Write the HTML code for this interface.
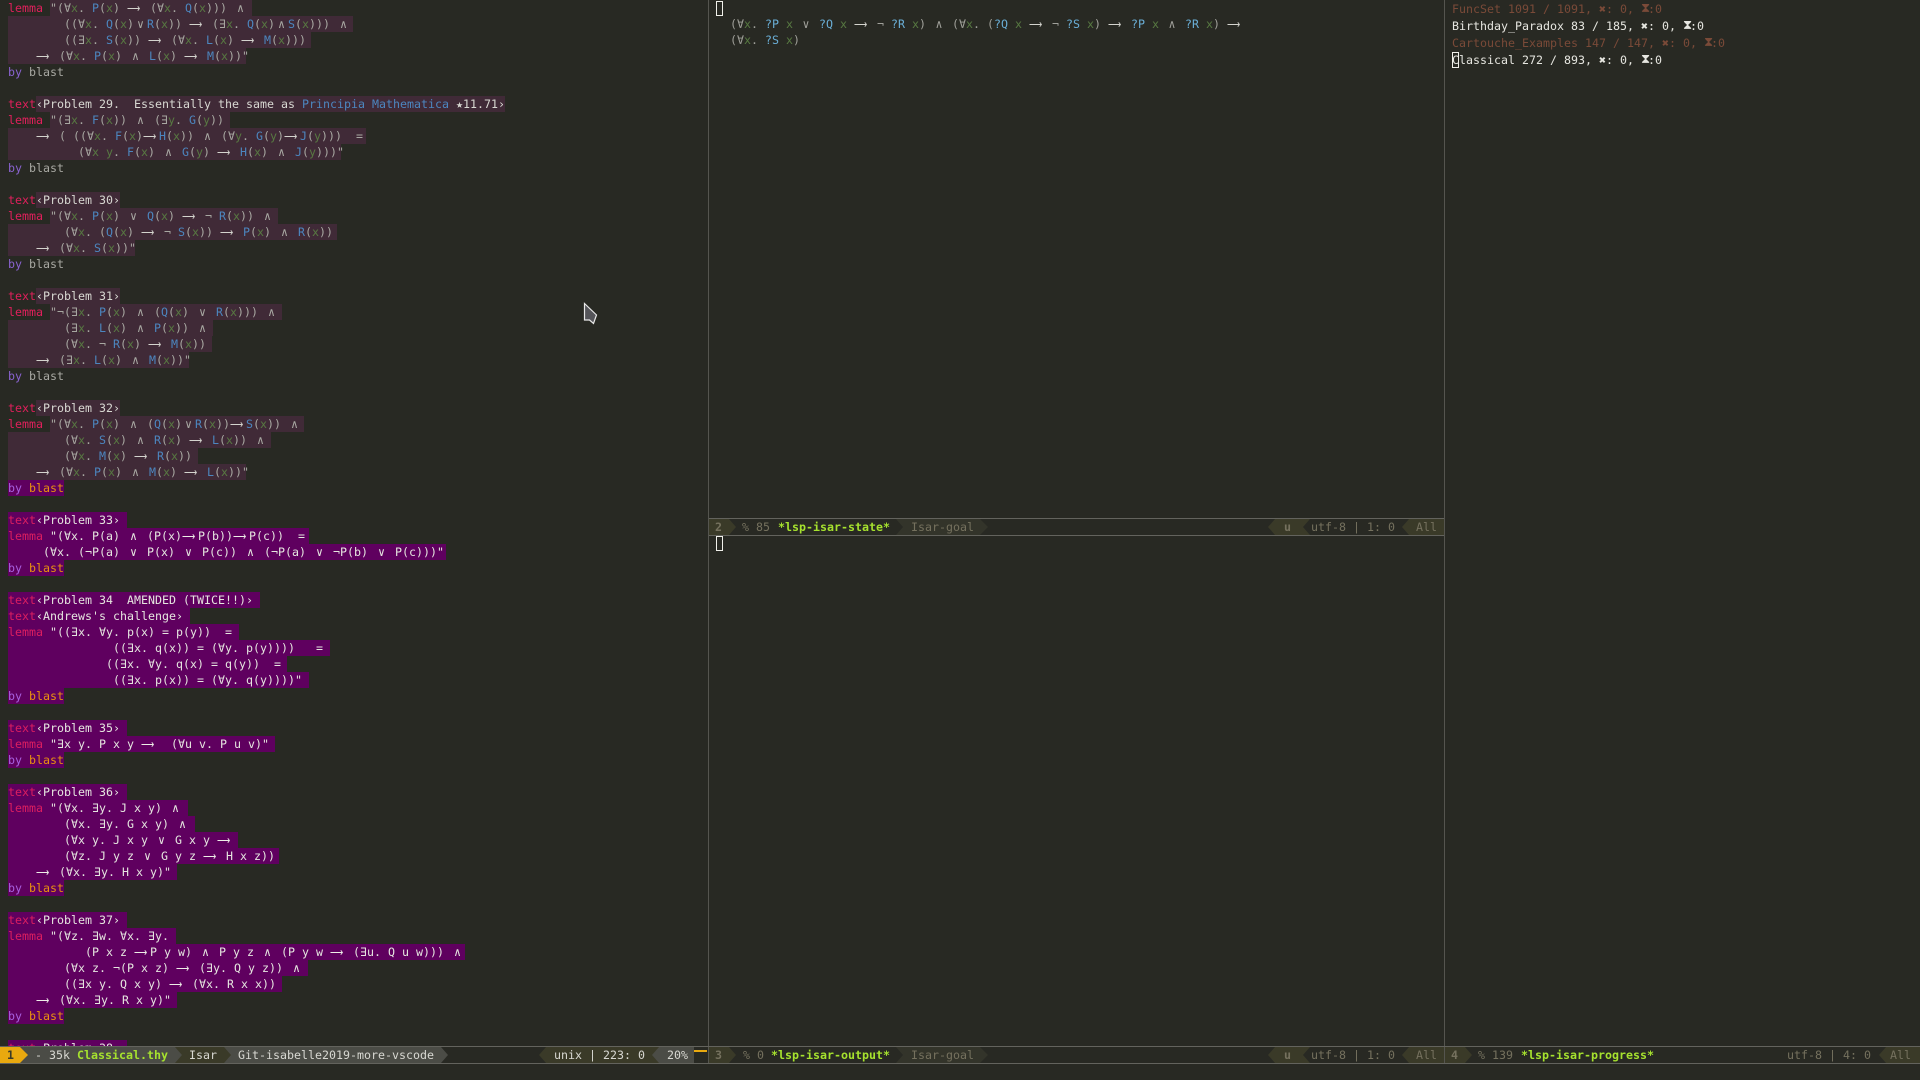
<!DOCTYPE html>
<html><head><meta charset="utf-8"><style>
html,body{margin:0;padding:0;width:1920px;height:1080px;overflow:hidden;background:#282923}
body{position:relative;font:11.63px/16px "DejaVu Sans Mono","Liberation Mono",monospace;color:#a8a8a2}
.r{position:absolute;left:8px;height:16px;white-space:pre;z-index:0}
.r em{position:absolute;top:0;left:0;height:16px;z-index:-1;display:block}
.d em{background:#402a37}
.c em{background:#5f005f}
.c{color:#e6e6e0}
.w{color:#d8d8d2}
a{color:#e0205c}
.c a{color:#dc1e60}
i{font-style:normal;color:#4c86bf}
b{font-weight:normal;color:#587a42}
s{text-decoration:none;display:inline-block;width:16px;height:16px;text-align:left;color:#d4d4ce;overflow:visible;white-space:nowrap;font-family:"DejaVu Sans",sans-serif;vertical-align:top;transform:scaleX(.8);transform-origin:0 50%}
u{text-decoration:none;display:inline-block;width:13px;height:16px;text-align:center;vertical-align:top}
.c s{color:#eeeee8}
tt{font:inherit;color:#8a63d0}
kbd{font:inherit;color:#a8a8a2}
.c tt{color:#a860e0}
.c kbd{color:#e8900f}
.cur{position:absolute;box-sizing:border-box;border:1px solid #f0f0ea;width:7px;height:15px;z-index:3}
.v{position:absolute;top:0;width:1px;height:1064px;background:#55554f;z-index:2}
.h{position:absolute;height:1px;background:#63635d;z-index:4}
.mb{position:absolute;left:0;top:1046px;width:1920px;height:34px;background:#282923;z-index:2}
.t{position:absolute;white-space:pre;height:16px;z-index:5;color:#d8d8d2}
.g{font-weight:bold;color:#a6e22e}
.n{color:#75715e}
.m{position:absolute;left:0;top:0;z-index:4}
.q{position:absolute;left:730px;height:16px;white-space:pre;z-index:1;color:#a0a09a}
.q i{color:#6aaed6}
.q u{width:12px}
.p{position:absolute;left:1452px;height:16px;white-space:pre;z-index:1;color:#e6e6e0}
.p var{font-style:normal;display:inline-block;width:7px;height:16px;overflow:visible;vertical-align:top;font-family:"DejaVu Sans",sans-serif;font-size:13px}
.o{color:#7a4a38}
</style></head><body>

<div class="r d" style="top:0"><em style="left:42px;width:202px"></em><a>lemma</a> "(∀<b>x</b>. <i>P</i>(<b>x</b>) <s>⟶</s> (∀<b>x</b>. <i>Q</i>(<b>x</b>))) <u>∧</u></div>
<div class="r d" style="top:16px"><em style="width:345px"></em>        ((∀<b>x</b>. <i>Q</i>(<b>x</b>)<u>∨</u><i>R</i>(<b>x</b>)) <s>⟶</s> (∃<b>x</b>. <i>Q</i>(<b>x</b>)<u>∧</u><i>S</i>(<b>x</b>))) <u>∧</u></div>
<div class="r d" style="top:32px"><em style="width:303px"></em>        ((∃<b>x</b>. <i>S</i>(<b>x</b>)) <s>⟶</s> (∀<b>x</b>. <i>L</i>(<b>x</b>) <s>⟶</s> <i>M</i>(<b>x</b>)))</div>
<div class="r d" style="top:48px"><em style="width:238px"></em>    <s>⟶</s> (∀<b>x</b>. <i>P</i>(<b>x</b>) <u>∧</u> <i>L</i>(<b>x</b>) <s>⟶</s> <i>M</i>(<b>x</b>))"</div>
<div class="r" style="top:64px"><tt>by</tt> <kbd>blast</kbd></div>

<div class="r d w" style="top:96px"><em style="left:28px;width:469px"></em><a>text</a>‹Problem 29.  Essentially the same as <i>Principia Mathematica</i> ★11.71›</div>
<div class="r d" style="top:112px"><em style="left:42px;width:180px"></em><a>lemma</a> "(∃<b>x</b>. <i>F</i>(<b>x</b>)) <u>∧</u> (∃<b>y</b>. <i>G</i>(<b>y</b>))</div>
<div class="r d" style="top:128px"><em style="width:358px"></em>    <s>⟶</s> ( ((∀<b>x</b>. <i>F</i>(<b>x</b>)<s>⟶</s><i>H</i>(<b>x</b>)) <u>∧</u> (∀<b>y</b>. <i>G</i>(<b>y</b>)<s>⟶</s><i>J</i>(<b>y</b>)))  =</div>
<div class="r d" style="top:144px"><em style="width:333px"></em>          (∀<b>x</b> <b>y</b>. <i>F</i>(<b>x</b>) <u>∧</u> <i>G</i>(<b>y</b>) <s>⟶</s> <i>H</i>(<b>x</b>) <u>∧</u> <i>J</i>(<b>y</b>)))"</div>
<div class="r" style="top:160px"><tt>by</tt> <kbd>blast</kbd></div>

<div class="r d w" style="top:192px"><em style="left:28px;width:84px"></em><a>text</a>‹Problem 30›</div>
<div class="r d" style="top:208px"><em style="left:42px;width:228px"></em><a>lemma</a> "(∀<b>x</b>. <i>P</i>(<b>x</b>) <u>∨</u> <i>Q</i>(<b>x</b>) <s>⟶</s> ¬ <i>R</i>(<b>x</b>)) <u>∧</u></div>
<div class="r d" style="top:224px"><em style="width:329px"></em>        (∀<b>x</b>. (<i>Q</i>(<b>x</b>) <s>⟶</s> ¬ <i>S</i>(<b>x</b>)) <s>⟶</s> <i>P</i>(<b>x</b>) <u>∧</u> <i>R</i>(<b>x</b>))</div>
<div class="r d" style="top:240px"><em style="width:127px"></em>    <s>⟶</s> (∀<b>x</b>. <i>S</i>(<b>x</b>))"</div>
<div class="r" style="top:256px"><tt>by</tt> <kbd>blast</kbd></div>

<div class="r d w" style="top:288px"><em style="left:28px;width:84px"></em><a>text</a>‹Problem 31›</div>
<div class="r d" style="top:304px"><em style="left:42px;width:232px"></em><a>lemma</a> "¬(∃<b>x</b>. <i>P</i>(<b>x</b>) <u>∧</u> (<i>Q</i>(<b>x</b>) <u>∨</u> <i>R</i>(<b>x</b>))) <u>∧</u></div>
<div class="r d" style="top:320px"><em style="width:205px"></em>        (∃<b>x</b>. <i>L</i>(<b>x</b>) <u>∧</u> <i>P</i>(<b>x</b>)) <u>∧</u></div>
<div class="r d" style="top:336px"><em style="width:204px"></em>        (∀<b>x</b>. ¬ <i>R</i>(<b>x</b>) <s>⟶</s> <i>M</i>(<b>x</b>))</div>
<div class="r d" style="top:352px"><em style="width:181px"></em>    <s>⟶</s> (∃<b>x</b>. <i>L</i>(<b>x</b>) <u>∧</u> <i>M</i>(<b>x</b>))"</div>
<div class="r" style="top:368px"><tt>by</tt> <kbd>blast</kbd></div>

<div class="r d w" style="top:400px"><em style="left:28px;width:84px"></em><a>text</a>‹Problem 32›</div>
<div class="r d" style="top:416px"><em style="left:42px;width:254px"></em><a>lemma</a> "(∀<b>x</b>. <i>P</i>(<b>x</b>) <u>∧</u> (<i>Q</i>(<b>x</b>)<u>∨</u><i>R</i>(<b>x</b>))<s>⟶</s><i>S</i>(<b>x</b>)) <u>∧</u></div>
<div class="r d" style="top:432px"><em style="width:263px"></em>        (∀<b>x</b>. <i>S</i>(<b>x</b>) <u>∧</u> <i>R</i>(<b>x</b>) <s>⟶</s> <i>L</i>(<b>x</b>)) <u>∧</u></div>
<div class="r d" style="top:448px"><em style="width:190px"></em>        (∀<b>x</b>. <i>M</i>(<b>x</b>) <s>⟶</s> <i>R</i>(<b>x</b>))</div>
<div class="r d" style="top:464px"><em style="width:238px"></em>    <s>⟶</s> (∀<b>x</b>. <i>P</i>(<b>x</b>) <u>∧</u> <i>M</i>(<b>x</b>) <s>⟶</s> <i>L</i>(<b>x</b>))"</div>
<div class="r c" style="top:480px"><em style="width:56px"></em><tt>by</tt> <kbd>blast</kbd></div>

<div class="r c" style="top:512px"><em style="width:119px"></em><a>text</a>‹Problem 33›</div>
<div class="r c" style="top:528px"><em style="width:301px"></em><a>lemma</a> "(∀x. P(a) <u>∧</u> (P(x)<s>⟶</s>P(b))<s>⟶</s>P(c))  =</div>
<div class="r c" style="top:544px"><em style="width:438px"></em>     (∀x. (¬P(a) <u>∨</u> P(x) <u>∨</u> P(c)) <u>∧</u> (¬P(a) <u>∨</u> ¬P(b) <u>∨</u> P(c)))"</div>
<div class="r c" style="top:560px"><em style="width:56px"></em><tt>by</tt> <kbd>blast</kbd></div>

<div class="r c" style="top:592px"><em style="width:252px"></em><a>text</a>‹Problem 34  AMENDED (TWICE!!)›</div>
<div class="r c" style="top:608px"><em style="width:182px"></em><a>text</a>‹Andrews's challenge›</div>
<div class="r c" style="top:624px"><em style="width:231px"></em><a>lemma</a> "((∃x. ∀y. p(x) = p(y))  =</div>
<div class="r c" style="top:640px"><em style="width:322px"></em>               ((∃x. q(x)) = (∀y. p(y))))   =</div>
<div class="r c" style="top:656px"><em style="width:279px"></em>              ((∃x. ∀y. q(x) = q(y))  =</div>
<div class="r c" style="top:672px"><em style="width:301px"></em>               ((∃x. p(x)) = (∀y. q(y))))"</div>
<div class="r c" style="top:688px"><em style="width:56px"></em><tt>by</tt> <kbd>blast</kbd></div>

<div class="r c" style="top:720px"><em style="width:119px"></em><a>text</a>‹Problem 35›</div>
<div class="r c" style="top:736px"><em style="width:267px"></em><a>lemma</a> "∃x y. P x y <s>⟶</s>  (∀u v. P u v)"</div>
<div class="r c" style="top:752px"><em style="width:56px"></em><tt>by</tt> <kbd>blast</kbd></div>

<div class="r c" style="top:784px"><em style="width:119px"></em><a>text</a>‹Problem 36›</div>
<div class="r c" style="top:800px"><em style="width:180px"></em><a>lemma</a> "(∀x. ∃y. J x y) <u>∧</u></div>
<div class="r c" style="top:816px"><em style="width:187px"></em>        (∀x. ∃y. G x y) <u>∧</u></div>
<div class="r c" style="top:832px"><em style="width:230px"></em>        (∀x y. J x y <u>∨</u> G x y <s>⟶</s></div>
<div class="r c" style="top:848px"><em style="width:271px"></em>        (∀z. J y z <u>∨</u> G y z <s>⟶</s> H x z))</div>
<div class="r c" style="top:864px"><em style="width:169px"></em>    <s>⟶</s> (∀x. ∃y. H x y)"</div>
<div class="r c" style="top:880px"><em style="width:56px"></em><tt>by</tt> <kbd>blast</kbd></div>

<div class="r c" style="top:912px"><em style="width:119px"></em><a>text</a>‹Problem 37›</div>
<div class="r c" style="top:928px"><em style="width:168px"></em><a>lemma</a> "(∀z. ∃w. ∀x. ∃y.</div>
<div class="r c" style="top:944px"><em style="width:457px"></em>           (P x z <s>⟶</s>P y w) <u>∧</u> P y z <u>∧</u> (P y w <s>⟶</s> (∃u. Q u w))) <u>∧</u></div>
<div class="r c" style="top:960px"><em style="width:300px"></em>        (∀x z. ¬(P x z) <s>⟶</s> (∃y. Q y z)) <u>∧</u></div>
<div class="r c" style="top:976px"><em style="width:274px"></em>        ((∃x y. Q x y) <s>⟶</s> (∀x. R x x))</div>
<div class="r c" style="top:992px"><em style="width:169px"></em>    <s>⟶</s> (∀x. ∃y. R x y)"</div>
<div class="r c" style="top:1008px"><em style="width:56px"></em><tt>by</tt> <kbd>blast</kbd></div>
<div class="r c" style="top:1040px"><em style="width:119px"></em><a>text</a>‹Problem 38›</div>

<div class="cur" style="left:716px;top:1px"></div>
<div class="q" style="top:16px">(∀<b>x</b>. <i>?P</i> <b>x</b> <u>∨</u> <i>?Q</i> <b>x</b> <s>⟶</s> ¬ <i>?R</i> <b>x</b>) <u>∧</u> (∀<b>x</b>. (<i>?Q</i> <b>x</b> <s>⟶</s> ¬ <i>?S</i> <b>x</b>) <s>⟶</s> <i>?P</i> <b>x</b> <u>∧</u> <i>?R</i> <b>x</b>) <s>⟶</s></div>
<div class="q" style="top:32px">(∀<b>x</b>. <i>?S</i> <b>x</b>)</div>
<div class="cur" style="left:716px;top:536px"></div>

<div class="p o" style="top:1px">FuncSet 1091 / 1091, ✖: 0, <var>⧗</var>:0</div>
<div class="p" style="top:18px">Birthday_Paradox 83 / 185, ✖: 0, <var>⧗</var>:0</div>
<div class="p o" style="top:35px">Cartouche_Examples 147 / 147, ✖: 0, <var>⧗</var>:0</div>
<div class="p" style="top:52px">Classical 272 / 893, ✖: 0, <var>⧗</var>:0</div>
<div class="cur" style="left:1452px;top:52px;height:16px"></div>

<div class="mb"></div>
<div class="v" style="left:708px"></div>
<div class="v" style="left:1444px"></div>
<div class="h" style="left:709px;top:518px;width:735px"></div>
<div class="h" style="left:709px;top:535px;width:735px"></div>
<div class="h" style="left:0;top:1046px;width:1920px"></div>
<div class="h" style="left:0;top:1063px;width:1920px"></div>

<svg class="m" width="1920" height="1080" viewBox="0 0 1920 1080">
<polygon fill="#282923" points="709,519 1444,519 1444,535 709,535"/>
<polygon fill="#33342a" points="896,519 980,519 988,527 980,535 896,535 903,527"/>
<polygon fill="#3a3a28" points="709,519 729,519 736,527 729,535 709,535"/>
<polygon fill="#3a3a28" points="1268,527 1275,519 1312,519 1312,535 1275,535"/>
<polygon fill="#282923" points="1303,527 1310,519 1410,519 1410,535 1310,535"/>
<polygon fill="#3a3a28" points="1402,527 1409,519 1444,519 1444,535 1409,535"/>

<polygon fill="#4b4c46" points="224,1047 441,1047 448,1055 441,1063 224,1063"/>
<polygon fill="#3a3a28" points="175,1047 224,1047 231,1055 224,1063 175,1063"/>
<polygon fill="#4b4c46" points="20,1047 175,1047 182,1055 175,1063 20,1063"/>
<polygon fill="#e9a90f" points="0,1047 20,1047 28,1055 20,1063 0,1063"/>
<polygon fill="#3a3a28" points="539,1055 546,1047 660,1047 660,1063 546,1063"/>
<polygon fill="#4b4c46" points="652,1055 659,1047 694,1047 694,1063 659,1063"/>
<rect fill="#e9a90f" x="694" y="1050" width="13" height="2"/>
<polygon fill="#3a3a28" points="709,1047 729,1047 736,1055 729,1063 709,1063"/>
<polygon fill="#33342a" points="896,1047 980,1047 988,1055 980,1063 896,1063 903,1055"/>
<polygon fill="#3a3a28" points="1268,1055 1275,1047 1312,1047 1312,1063 1275,1063"/>
<polygon fill="#282923" points="1303,1055 1310,1047 1410,1047 1410,1063 1310,1063"/>
<polygon fill="#3a3a28" points="1402,1055 1409,1047 1444,1047 1444,1063 1409,1063"/>
<polygon fill="#3a3a28" points="1445,1047 1465,1047 1472,1055 1465,1063 1445,1063"/>
<polygon fill="#3a3a28" points="1879,1055 1886,1047 1920,1047 1920,1063 1886,1063"/>
<path d="M584.5 303.5V320H589.5L593.5 323.5L596.5 315Z" fill="#55555a" stroke="#e8e8e8" stroke-width="1.2"/>
</svg>

<span class="t n" style="left:715px;top:519px;font-weight:bold">2</span>
<span class="t n" style="left:742px;top:519px">% 85</span>
<span class="t g" style="left:778px;top:519px">*lsp-isar-state*</span>
<span class="t n" style="left:911px;top:519px">Isar-goal</span>
<span class="t n" style="left:1284px;top:519px;font-weight:bold">u</span>
<span class="t n" style="left:1311px;top:519px">utf-8 | 1: 0</span>
<span class="t n" style="left:1416px;top:519px">All</span>

<span class="t" style="left:7px;top:1047px;color:#3a3a28;font-weight:bold">1</span>
<span class="t" style="left:35px;top:1047px">- 35k</span>
<span class="t g" style="left:77px;top:1047px">Classical.thy</span>
<span class="t" style="left:189px;top:1047px">Isar</span>
<span class="t" style="left:238px;top:1047px">Git-isabelle2019-more-vscode</span>
<span class="t" style="left:554px;top:1047px">unix | 223: 0</span>
<span class="t" style="left:667px;top:1047px">20%</span>
<span class="t n" style="left:715px;top:1047px;font-weight:bold">3</span>
<span class="t n" style="left:743px;top:1047px">% 0</span>
<span class="t g" style="left:771px;top:1047px">*lsp-isar-output*</span>
<span class="t n" style="left:911px;top:1047px">Isar-goal</span>
<span class="t n" style="left:1284px;top:1047px;font-weight:bold">u</span>
<span class="t n" style="left:1311px;top:1047px">utf-8 | 1: 0</span>
<span class="t n" style="left:1416px;top:1047px">All</span>
<span class="t n" style="left:1451px;top:1047px;font-weight:bold">4</span>
<span class="t n" style="left:1478px;top:1047px">% 139</span>
<span class="t g" style="left:1521px;top:1047px">*lsp-isar-progress*</span>
<span class="t n" style="left:1787px;top:1047px">utf-8 | 4: 0</span>
<span class="t n" style="left:1890px;top:1047px">All</span>
</body></html>
